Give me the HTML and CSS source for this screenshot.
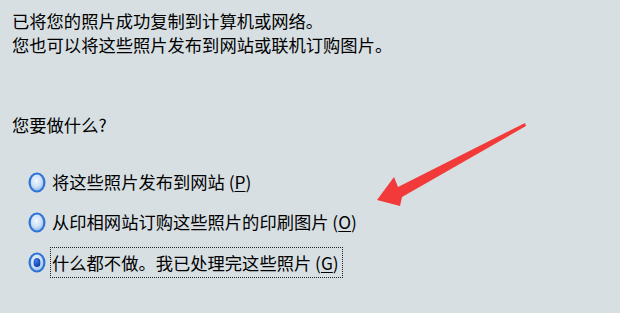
FILE: index.html
```html
<!DOCTYPE html>
<html lang="zh-CN">
<head>
<meta charset="UTF-8" />
<title>照片复制完成</title>
<link rel="stylesheet" href="styles.css">
</head>
<body>
  <div class="page">
    <p class="intro">已将您的照片成功复制到计算机或网络。<br>您也可以将这些照片发布到网站或联机订购图片。</p>

    <p class="question">您要做什么?</p>

    <div class="options">
      <label class="option">
        <svg class="radio" width="18" height="21" viewBox="0 0 18 21">
          <defs>
            <radialGradient id="fill1" cx="45%" cy="40%" r="65%">
              <stop offset="0" stop-color="#f4f9ff"/>
              <stop offset="0.5" stop-color="#cfe2f8"/>
              <stop offset="1" stop-color="#7eaee8"/>
            </radialGradient>
          </defs>
          <ellipse cx="9" cy="10.5" rx="7.4" ry="9" fill="url(#fill1)" stroke="#2f74d4" stroke-width="2.2"/>
        </svg>
        <span class="text">将这些照片发布到网站 (<u>P</u>)</span>
      </label>
      <label class="option">
        <svg class="radio" width="18" height="21" viewBox="0 0 18 21">
          <ellipse cx="9" cy="10.5" rx="7.4" ry="9" fill="url(#fill1)" stroke="#2f74d4" stroke-width="2.2"/>
        </svg>
        <span class="text">从印相网站订购这些照片的印刷图片 (<u>O</u>)</span>
      </label>
      <label class="option">
        <svg class="radio" width="18" height="21" viewBox="0 0 18 21">
          <defs>
            <radialGradient id="dot" cx="40%" cy="35%" r="70%">
              <stop offset="0" stop-color="#3f7fe8"/>
              <stop offset="1" stop-color="#0a34a0"/>
            </radialGradient>
          </defs>
          <ellipse cx="9" cy="10.5" rx="7.4" ry="9" fill="url(#fill1)" stroke="#2f74d4" stroke-width="2.2"/>
          <ellipse cx="9" cy="10.5" rx="3.4" ry="4.6" fill="url(#dot)"/>
        </svg>
        <span class="text focused">什么都不做。我已处理完这些照片 (<u>G</u>)</span>
      </label>
    </div>

    <svg class="arrow" width="620" height="313" viewBox="0 0 620 313">
      <polygon points="377,200 394,177 398,187 525,123 526,126 402,197 400,206" fill="#f23a3a"/>
    </svg>
  </div>
</body>
</html>
```

FILE: styles.css
```css
html, body{
  margin: 0;
  padding: 0;
  background-color: #d7dfe2;
}

.page{
  position: relative;
  width: 620px;
  height: 313px;
  overflow: hidden;
  padding: 9px 0 0 12px;
  box-sizing: border-box;
  font-family: "Noto Sans CJK SC", "DejaVu Sans", sans-serif;
  font-size: 17.3px;
  color: #000;
}

p{
  margin: 0;
  line-height: 24px;
}

.question{
  margin-top: 56px;
}

.options{
  display: flex;
  flex-direction: column;
  margin-top: 25px;
  padding-left: 16px;
}

.option{
  display: flex;
  align-items: center;
  gap: 6px;
  height: 40px;
}

.radio{
  flex: none;
}

.text{
  line-height: 24px;
  padding: 2px 0;
}

.text u{
  text-decoration-thickness: 1px;
  text-underline-offset: 2px;
}

.focused{
  outline: 1px dotted #222;
  outline-offset: 0;
  padding: 3px 3px 2px 1px;
  margin-left: -1px;
}

.arrow{
  position: absolute;
  left: 0;
  top: 0;
  pointer-events: none;
}
```
